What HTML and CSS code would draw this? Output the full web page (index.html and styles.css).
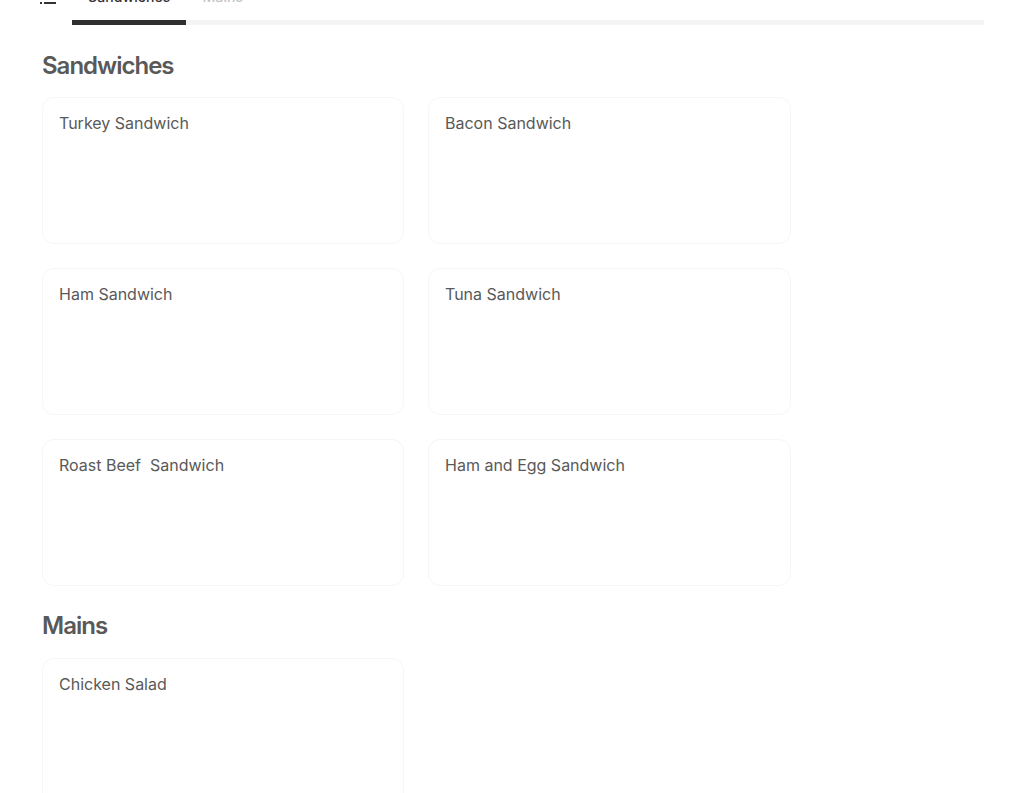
FILE: index.html
```html
<!DOCTYPE html>
<html lang="en">
<head>
<meta charset="utf-8">
<title>Menu</title>
<link rel="stylesheet" href="styles.css">
</head>
<body>
<div class="page">
  <nav class="tabs-row">
    <svg class="list-icon" width="16" height="16" viewBox="0 0 16 16" aria-hidden="true">
      <rect x="0" y="2" width="2" height="2" fill="#333"/>
      <rect x="4" y="2" width="12" height="2" fill="#333"/>
      <rect x="0" y="8" width="2" height="2" fill="#333"/>
      <rect x="4" y="8" width="12" height="2" fill="#333"/>
      <rect x="0" y="14" width="2" height="2" fill="#333"/>
      <rect x="4" y="14" width="12" height="2" fill="#333"/>
    </svg>
    <div class="tabs">
      <a class="tab active">Sandwiches</a>
      <a class="tab">Mains</a>
    </div>
  </nav>
  <section class="section">
    <h2 class="heading">Sandwiches</h2>
    <div class="grid">
      <div class="card">Turkey Sandwich</div>
      <div class="card">Bacon Sandwich</div>
      <div class="card">Ham Sandwich</div>
      <div class="card">Tuna Sandwich</div>
      <div class="card">Roast Beef&nbsp; Sandwich</div>
      <div class="card">Ham and Egg Sandwich</div>
    </div>
  </section>
  <section class="section mains">
    <h2 class="heading">Mains</h2>
    <div class="grid">
      <div class="card">Chicken Salad</div>
    </div>
  </section>
</div>
</body>
</html>
```
FILE: styles.css
```css
html, body {
  margin: 0;
  padding: 0;
  height: 793px;
  overflow: hidden;
  background: #fff;
}
.page {
  margin-top: -24px;
  padding: 0 40px 0 42px;
  font-family: Inter, "Liberation Sans", sans-serif;
  color: #595959;
}
.tabs-row {
  display: flex;
  align-items: flex-start;
  margin-left: -2px;
  height: 49px;
}
.list-icon {
  flex: none;
  margin-top: 12px;
  width: 16px;
  height: 16px;
  margin-right: 16px;
}
.tabs {
  flex: 1;
  display: flex;
  height: 49px;
  box-sizing: border-box;
  border-bottom: 5px solid #f4f4f4;
}
.tab {
  height: 49px;
  box-sizing: border-box;
  padding: 11px 16px 0;
  font-size: 14px;
  line-height: 20px;
  font-weight: 500;
  letter-spacing: 0.1px;
  color: #c4c4c4;
}
.tab.active {
  color: #333;
  border-bottom: 5px solid #2f2f2f;
}
.section {
  padding-top: 25px;
}
.section.mains {
  padding-top: 24px;
}
.heading {
  margin: 0 0 15px;
  font-size: 24px;
  line-height: 32px;
  font-weight: 600;
  letter-spacing: -1px;
  color: #595959;
}
.mains .heading {
  margin-bottom: 16px;
}
.grid {
  display: grid;
  grid-template-columns: 362px 363px;
  column-gap: 24px;
  row-gap: 24px;
}
.card {
  height: 147px;
  box-sizing: border-box;
  padding: 15px 16px;
  border: 1px solid #f6f6f6;
  border-radius: 12px;
  font-size: 16px;
  line-height: 20px;
  color: #595959;
}
```
